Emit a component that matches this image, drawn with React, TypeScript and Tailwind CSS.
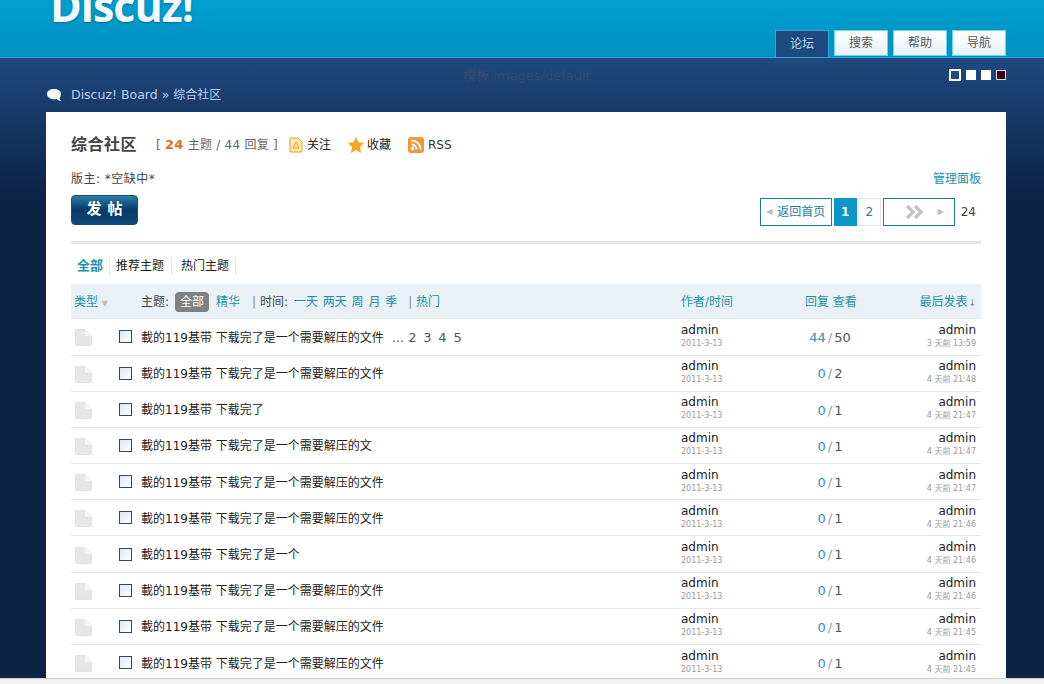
const base = "載的119基带 下载完了是一个需要解压的文件";
const rows = [
  { t: base, pages: true, r: "44", v: "50", last: "3 天前 13:59" },
  { t: base, r: "0", v: "2", last: "4 天前 21:48" },
  { t: "載的119基带 下载完了", r: "0", v: "1", last: "4 天前 21:47" },
  { t: "載的119基带 下载完了是一个需要解压的文", r: "0", v: "1", last: "4 天前 21:47" },
  { t: base, r: "0", v: "1", last: "4 天前 21:47" },
  { t: base, r: "0", v: "1", last: "4 天前 21:46" },
  { t: "載的119基带 下载完了是一个", r: "0", v: "1", last: "4 天前 21:46" },
  { t: base, r: "0", v: "1", last: "4 天前 21:46" },
  { t: base, r: "0", v: "1", last: "4 天前 21:45" },
  { t: base, r: "0", v: "1", last: "4 天前 21:45" },
];

function FileIcon() {
  return (
    <svg width="17" height="17" viewBox="0 0 17 17">
      <path d="M1 0.5H10L16.5 7V15.5Q16.5 16.5 15.5 16.5H1.5Q0.5 16.5 0.5 15.5V1Q0.5 0.5 1 0.5Z" fill="#e6e6e6" stroke="#e0e0e0" />
      <path d="M10 0.5V7H16.5Z" fill="#f4f4f4" />
    </svg>
  );
}

function Row({ row, first }: { row: (typeof rows)[number]; first: boolean }) {
  return (
    <div className={first ? "flex h-[37px] items-center border-b border-[#e6e6e6] text-[12px]" : "flex h-[36.2px] items-center border-b border-[#e6e6e6] text-[12px]"}>
      <div className="w-[48px] pl-[4px] pt-[2px]"><FileIcon /></div>
      <div className="h-[13px] w-[13px] border border-[#2f4a5f] bg-gradient-to-br from-[#dfe6f1] to-white" />
      <div className="ml-[9px] flex w-[540px] items-center pt-[2px] text-[#222]">
        <span>{row.t}</span>
        {row.pages && (
          <span className="ml-[8px] flex text-[13px] text-[#555]">
            <span>...</span>
            <span className="ml-[4px] [word-spacing:2.7px]">2 3 4 5</span>
          </span>
        )}
      </div>
      <div className="w-[90px] pb-[1px]">
        <div className="text-[12px] leading-[14px] text-[#222]">admin</div>
        <div className="text-[8px] leading-[13px] text-[#999]">2011-3-13</div>
      </div>
      <div className="w-[118px] pt-[2px] text-center text-[13px] text-[#555]">
        <span className="text-[#3a8fb0]">{row.r}</span>
        <span className="mx-[2px] text-[#999]">/</span>
        {row.v}
      </div>
      <div className="flex-1 pb-[1px] pr-[5px] text-right">
        <div className="text-[12px] leading-[14px] text-[#222]">admin</div>
        <div className="text-[8px] leading-[13px] text-[#999]">{row.last}</div>
      </div>
    </div>
  );
}

export default function App() {
  return (
    <div className="h-[684px] overflow-hidden bg-[#0b2345] font-['DejaVu_Sans','Noto_Sans_CJK_SC',sans-serif] text-[12px]">
      <div className="flex h-[57px] items-end justify-between overflow-hidden bg-gradient-to-b from-[#009fcf] to-[#0191c3] pl-[50px] pr-[38px]">
        <div className="mb-[31px] font-['Open_Sans',sans-serif] text-[43px] leading-[40px] font-bold tracking-[-1px] text-[#f2f8fb] [text-shadow:0_1px_2px_rgba(0,60,90,0.5)]">Discuz!</div>
        <div className="flex gap-[5px]">
          <div className="-mb-px flex h-[27px] w-[54px] items-center justify-center border-x border-t border-[#2aa8d8] bg-[#1f4a80] text-[#b9d8f0]">论坛</div>
          {["搜索", "帮助", "导航"].map((n) => (
            <div key={n} className="mb-px flex h-[26px] w-[54px] items-center justify-center border border-[#6fd6f0] bg-gradient-to-b from-white to-[#e6f2f8] text-[#555]">{n}</div>
          ))}
        </div>
      </div>
      <div className="h-[140px] border-t border-[#2aa8d8] bg-gradient-to-b from-[#1f4a80] to-[#0b2345]">
        <div className="relative h-[54px]">
          <div className="absolute left-[463px] top-[8px] text-[13px] text-[#3a4a68]">模板 images/default</div>
          <div className="flex justify-end gap-[5px] pr-[38px] pt-[11px]">
            <div className="h-[12px] w-[12px] border-[2px] border-white bg-[#1f4a80]" />
            <div className="mt-px h-[10px] w-[10px] bg-white" />
            <div className="mt-px h-[10px] w-[10px] bg-white" />
            <div className="mt-px h-[10px] w-[10px] border border-[#ddd] bg-[#3a0015]" />
          </div>
          <div className="absolute left-[46px] top-[28px] flex items-center text-[12.5px] text-[#bcd0ea]">
            <svg width="16" height="14" viewBox="0 0 16 14" className="mr-[9px]">
              <path d="M8 1C12 1 15 3 15 6C15 8 14 9.500 13.500 10L15 13C13 13 11.500 12 10.500 11C6 12 1 10 1 6C1 3 4 1 8 1Z" fill="#f4f6f8" />
            </svg>
            <span>Discuz! Board » <span className="text-[12px]">综合社区</span></span>
          </div>
        </div>
      </div>
      <div className="relative -mt-[85px] ml-[46px] mr-[38px] h-[572px] overflow-hidden bg-white px-[25px]">
        <div className="flex items-center pt-[23px] text-[#333]">
          <span className="text-[16px] font-bold leading-[18px] tracking-[0.5px] text-[#444]">综合社区</span>
          <span className="ml-[19px] tracking-[0.25px] text-[#666]">[ <b className="text-[13px] text-[#e0701c]">24</b> 主题 / 44 回复 ]</span>
          <svg width="16" height="16" viewBox="0 0 16 16" className="ml-[10px]">
            <path d="M2 1H10L14 5V15H2Z" fill="#fde9a8" stroke="#d9a441" />
            <path d="M8 5L11 11H5Z" fill="none" stroke="#d9a441" />
          </svg>
          <span className="ml-[3px] text-[#222]">关注</span>
          <svg width="18" height="18" viewBox="0 0 18 18" className="ml-[16px]">
            <path d="M9 1L11.500 6.300L17 7L13 11L14 17L9 14L4 17L5 11L1 7L6.500 6.300Z" fill="#f5a623" />
          </svg>
          <span className="ml-[2px] text-[#222]">收藏</span>
          <div className="ml-[17px] flex h-[16px] w-[16px] items-center justify-center rounded-[3px] bg-[#f0973a]">
            <svg width="12" height="12" viewBox="0 0 12 12" fill="none" stroke="#fff" strokeWidth="1.800">
              <circle cx="2.500" cy="9.500" r="1" fill="#fff" />
              <path d="M1.500 5.500A5 5 0 0 1 6.500 10.500" />
              <path d="M1.500 1.500A9 9 0 0 1 10.500 10.500" />
            </svg>
          </div>
          <span className="ml-[4px] text-[#333]">RSS</span>
        </div>
        <div className="mt-[15px] flex justify-between text-[#444]">
          <span className="tracking-[0.5px]">版主: *空缺中*</span>
          <span className="text-[#1a92a8]">管理面板</span>
        </div>
        <div className="mt-[7px] flex items-start justify-between">
          <div className="flex h-[30px] w-[67px] items-center justify-center rounded-[4px] border border-[#1b4a6b] bg-gradient-to-b from-[#2d7fa8] via-[#073a68] to-[#0d4a78] pl-[6px] text-[15px] font-bold tracking-[6px] text-white">发帖</div>
          <div className="mr-[5px] mt-[3px] flex items-center text-[#1a7f9a]">
            <div className="flex h-[28px] w-[72px] items-center justify-center border border-[#1a7f9a]">
              <span className="mr-[5px] text-[8px] text-[#bbb]">◀</span>返回首页
            </div>
            <div className="ml-[2px] flex h-[28px] w-[23px] items-center justify-center bg-[#0a96c6] font-bold text-white">1</div>
            <div className="ml-px flex h-[28px] w-[23px] items-center justify-center border border-[#e6e6e6]">2</div>
            <div className="ml-[2px] flex h-[28px] w-[72px] items-center border border-[#1a7f9a] pl-[21px]">
              <svg width="20" height="14" viewBox="0 0 20 14" fill="none" stroke="#c4c4c4" strokeWidth="3.500"><path d="M2 1L8 7L2 13M10 1L16 7L10 13" /></svg>
              <span className="ml-[13px] text-[8px] text-[#bbb]">▶</span>
            </div>
            <span className="ml-[6px] text-[#444]">24</span>
          </div>
        </div>
        <div className="mt-[15px] h-[3px] bg-[#e8e6e0]" />
        <div className="mt-[15px] flex h-[14px] items-center pl-[6px] text-[#222]">
          <b className="pr-[6px] text-[13px] text-[#1a92a8]">全部</b>
          <span className="border-l border-[#e6e6e6] pl-[6px] pr-[7px]">推荐主题</span>
          <span className="border-x border-[#e6e6e6] pl-[9px] pr-[6px]">热门主题</span>
        </div>
        <div className="mt-[11px] flex h-[35px] items-center border-b border-[#dfe8ef] bg-[#e9f1f7] pt-[2px] text-[#1a92a8]">
          <div className="flex w-[610px] items-center">
            <span className="ml-[3px] w-[67px]">类型 <span className="text-[8px] text-[#bbb]">▼</span></span>
            <span className="text-[#444]">主题:</span>
            <span className="ml-[6px] rounded-[4px] bg-[#808080] px-[5px] py-px text-white">全部</span>
            <span className="ml-[7px]">精华</span>
            <span className="ml-[12px] text-[#444]"><span className="text-[#888]">|</span> 时间:</span>
            <span className="ml-[6px] [word-spacing:1px]">一天 两天 周 月 季</span>
            <span className="ml-[11px]"><span className="text-[#888]">|</span> 热门</span>
          </div>
          <span className="w-[124px]">作者/时间</span>
          <span className="w-[90px]">回复 查看</span>
          <span className="flex-1 pr-[5px] text-right">最后发表<span className="ml-px text-[9px] text-[#5a8a9a]">↓</span></span>
        </div>
        {rows.map((r, i) => <Row key={i} row={r} first={i === 0} />)}
      </div>
      <div className="relative -mt-[6px] h-[6px] border-t border-[#cfd0d4] bg-[#f1f1f1]" />
    </div>
  );
}
